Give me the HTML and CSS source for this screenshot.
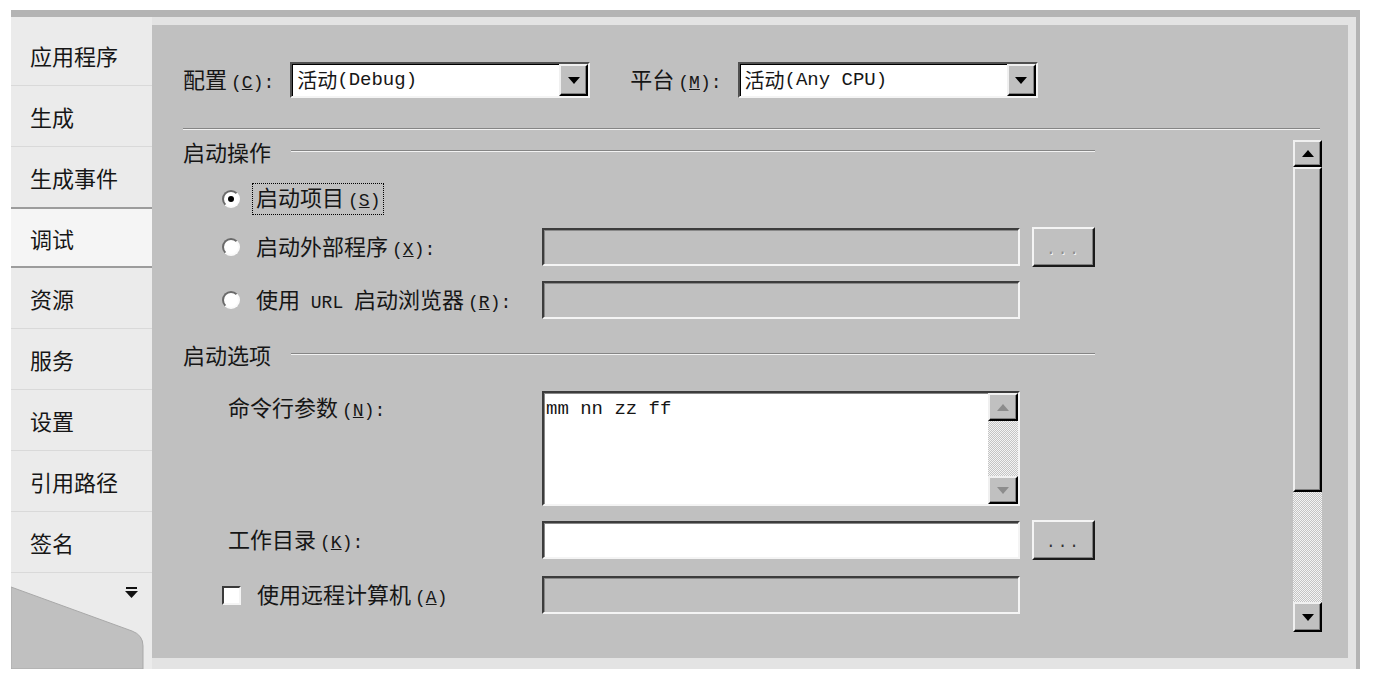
FILE: index.html
```html
<!DOCTYPE html>
<html>

<head>
    <meta charset="utf-8">
    <link rel="stylesheet" href="styles.css">
</head>

<body>

    <div class="frame">
        <div class="tabs">
            <div class="tab">应用程序</div>
            <div class="tab">生成</div>
            <div class="tab">生成事件</div>
            <div class="tab active">调试</div>
            <div class="tab">资源</div>
            <div class="tab">服务</div>
            <div class="tab">设置</div>
            <div class="tab">引用路径</div>
            <div class="tab">签名</div>
            <div class="tab-tail">
                <svg width="141" height="95" viewBox="0 0 141 95">
                    <path d="M0 13 L121 57 Q132 61 132 72 L132 95 L0 95 Z" fill="#c0c0c0" stroke="#a9a9a9" stroke-width="1"/>
                    <rect x="115" y="13" width="11" height="2" fill="#111"/>
                    <path d="M114 17 L127 17 L120.5 24 Z" fill="#111"/>
                </svg>
            </div>
        </div>

        <div class="panel">
            <div class="topbar">
                <span class="lbl">配置<span class="key">(<u>C</u>):</span></span>
                <div class="combo">
                    <span class="combo-text">活动<span class="mono">(Debug)</span></span>
                    <span class="drop"><svg width="12" height="7" viewBox="0 0 12 7"><path d="M0 0 L12 0 L6 7 Z" fill="#000"/></svg></span>
                </div>
                <span class="lbl platform">平台<span class="key">(<u>M</u>):</span></span>
                <div class="combo">
                    <span class="combo-text">活动<span class="mono">(Any CPU)</span></span>
                    <span class="drop"><svg width="12" height="7" viewBox="0 0 12 7"><path d="M0 0 L12 0 L6 7 Z" fill="#000"/></svg></span>
                </div>
            </div>

            <div class="content">
                <div class="form">
                    <div class="group">启动操作</div>

                    <div class="row row-start">
                        <div class="cell">
                            <span class="radio checked"></span>
                            <span class="focus">启动项目<span class="key">(<u>S</u>)</span></span>
                        </div>
                    </div>

                    <div class="row row-ext">
                        <div class="cell">
                            <span class="radio"></span>
                            <span>启动外部程序<span class="key">(<u>X</u>):</span></span>
                        </div>
                        <div class="field disabled"></div>
                        <div class="browse">...</div>
                    </div>

                    <div class="row row-url">
                        <div class="cell">
                            <span class="radio"></span>
                            <span>使用<span class="mono"> URL </span>启动浏览器<span class="key">(<u>R</u>):</span></span>
                        </div>
                        <div class="field disabled"></div>
                    </div>

                    <div class="group group-opts">启动选项</div>

                    <div class="row row-args">
                        <div class="cell plain">命令行参数<span class="key">(<u>N</u>):</span></div>
                        <div class="field memo">
                            <div class="memo-text">mm nn zz ff</div>
                            <div class="memo-scroll">
                                <span class="sbtn"><svg width="12" height="7" viewBox="0 0 12 7"><path d="M0 7 L6 0 L12 7 Z" fill="#8c8c8c"/></svg></span>
                                <span class="strack"></span>
                                <span class="sbtn"><svg width="12" height="7" viewBox="0 0 12 7"><path d="M0 0 L12 0 L6 7 Z" fill="#8c8c8c"/></svg></span>
                            </div>
                        </div>
                    </div>

                    <div class="row row-dir">
                        <div class="cell plain">工作目录<span class="key">(<u>K</u>):</span></div>
                        <div class="field"></div>
                        <div class="browse dark">...</div>
                    </div>

                    <div class="row row-remote">
                        <div class="cell">
                            <span class="check"></span>
                            <span>使用远程计算机<span class="key">(<u>A</u>)</span></span>
                        </div>
                        <div class="field disabled"></div>
                    </div>
                </div>

                <div class="vscroll">
                    <span class="sbtn big"><svg width="12" height="7" viewBox="0 0 12 7"><path d="M0 7 L6 0 L12 7 Z" fill="#000"/></svg></span>
                    <span class="thumb"></span>
                    <span class="strack"></span>
                    <span class="sbtn big"><svg width="12" height="7" viewBox="0 0 12 7"><path d="M0 0 L12 0 L6 7 Z" fill="#000"/></svg></span>
                </div>
            </div>
        </div>
    </div>

</body>

</html>
```

FILE: styles.css
```css
body {
    margin: 0;
    background: #fff;
    font-family: "Noto Sans CJK SC", sans-serif;
    font-size: 22px;
    line-height: 22px;
    color: #161616;
}

.mono,
.key {
    font-family: "Liberation Mono", "Noto Sans CJK SC", monospace;
    font-size: 18px;
}

.key {
    margin-left: 4px;
}

/* outer window frame */
.frame {
    display: flex;
    margin: 10px 0 0 11px;
    width: 1345px;
    height: 652px;
    border-top: 7px solid #b4b4b4;
    border-right: 4px solid #b4b4b4;
    background: #e3e3e3;
}

/* left tab strip */
.tabs {
    display: flex;
    flex-direction: column;
    width: 141px;
    padding-top: 8px;
    background: #ebebeb;
}

.tab {
    display: flex;
    align-items: center;
    height: 61px;
    padding-left: 19px;
    box-sizing: border-box;
    border-bottom: 1px solid #d9d9d9;
}

.tab.active {
    background: #f5f5f5;
    border-top: 2px solid #9c9c9c;
    border-bottom: 2px solid #9c9c9c;
    margin-top: -1px;
    margin-right: -1px;
}

.tab-tail {
    flex: 1;
    display: flex;
    align-items: flex-end;
}

.tab-tail svg {
    display: block;
}

/* main page */
.panel {
    flex: 1;
    display: flex;
    flex-direction: column;
    margin: 8px 8px 11px 0;
    background: #c0c0c0;
}

.topbar {
    display: flex;
    align-items: center;
    margin: 0 28px 0 31px;
    padding: 37px 0 30px;
    border-bottom: 1px solid #858585;
    box-shadow: 0 1px 0 #f2f2f2;
}

.lbl {
    white-space: nowrap;
}

.platform {
    margin-left: 40px;
}

.combo {
    display: flex;
    width: 300px;
    height: 36px;
    margin-left: 16px;
    box-sizing: border-box;
    background: #fff;
    border: 2px solid;
    border-color: #505050 #f4f4f4 #f4f4f4 #505050;
    box-shadow: inset 1px 1px 0 #000;
}

.combo-text {
    flex: 1;
    display: flex;
    align-items: center;
    padding-left: 5px;
    font-size: 20px;
}

.combo-text .mono {
    font-size: 19px;
}

.drop {
    display: flex;
    align-items: center;
    justify-content: center;
    width: 29px;
    box-sizing: border-box;
    background: #c0c0c0;
    border: 2px solid;
    border-color: #f0f0f0 #000 #000 #f0f0f0;
    box-shadow: inset -1px -1px 0 #808080;
}

.content {
    flex: 1;
    display: flex;
    margin: 11px 26px 26px 31px;
}

.form {
    width: 912px;
}

/* group header with etched rule */
.group {
    display: flex;
    align-items: center;
    height: 22px;
}

.group::after {
    content: "";
    flex: 1;
    margin-left: 20px;
    border-top: 1px solid #858585;
    border-bottom: 1px solid #f2f2f2;
}

.group-opts {
    margin-top: 24px;
}

.row {
    display: flex;
    align-items: center;
    height: 38px;
}

.row-start {
    margin-top: 18px;
}

.row-ext {
    margin-top: 10px;
}

.row-url {
    margin-top: 15px;
}

.row-args {
    margin-top: 26px;
    height: 115px;
    align-items: flex-start;
}

.row-dir {
    margin-top: 15px;
}

.row-remote {
    margin-top: 17px;
}

.cell {
    display: flex;
    align-items: center;
    gap: 16px;
    width: 359px;
    padding-left: 39px;
    box-sizing: border-box;
    white-space: nowrap;
}

.cell.plain {
    display: block;
    padding-left: 45px;
}

.row-args .cell {
    padding-top: 4px;
}

.radio {
    width: 18px;
    height: 18px;
    box-sizing: border-box;
    border-radius: 50%;
    background: #fff;
    border: 2px solid;
    border-color: #6a6a6a #fafafa #fafafa #6a6a6a;
    display: flex;
    align-items: center;
    justify-content: center;
}

.radio.checked::after {
    content: "";
    width: 6px;
    height: 6px;
    border-radius: 50%;
    background: #000;
}

.check {
    width: 19px;
    height: 19px;
    box-sizing: border-box;
    background: #fff;
    border: 2px solid;
    border-color: #3a3a3a #f4f4f4 #f4f4f4 #3a3a3a;
}

.focus {
    margin-left: -4px;
    padding: 1px 3px 2px;
    border: 1px dotted #000;
}

/* text boxes */
.field {
    width: 478px;
    height: 38px;
    box-sizing: border-box;
    background: #fff;
    border: 2px solid;
    border-color: #3c3c3c #f4f4f4 #f4f4f4 #3c3c3c;
    box-shadow: inset 1px 1px 0 #888;
}

.field.disabled {
    background: #c0c0c0;
}

.field.memo {
    display: flex;
    height: 115px;
}

.memo-text {
    flex: 1;
    padding: 6px 2px;
    font-family: "Liberation Mono", monospace;
    font-size: 19px;
    line-height: 20px;
}

.memo-scroll {
    display: flex;
    flex-direction: column;
    width: 30px;
}

.sbtn {
    display: flex;
    align-items: center;
    justify-content: center;
    height: 28px;
    box-sizing: border-box;
    background: #c0c0c0;
    border: 2px solid;
    border-color: #f0f0f0 #000 #000 #f0f0f0;
    box-shadow: inset -1px -1px 0 #808080;
}

.strack {
    flex: 1;
    background: repeating-conic-gradient(#f4f4f4 0 25%, #c4c4c4 0 50%) 0 0 / 2px 2px;
}

.browse {
    width: 63px;
    height: 40px;
    margin-left: 12px;
    box-sizing: border-box;
    background: #c0c0c0;
    border: 2px solid;
    border-color: #f4f4f4 #1a1a1a #1a1a1a #f4f4f4;
    box-shadow: inset -1px -1px 0 #808080;
    text-align: center;
    padding-top: 10px;
    font-family: "Liberation Mono", monospace;
    font-size: 16px;
    letter-spacing: 2px;
    color: #8e8e8e;
    text-shadow: 1px 1px 0 #f4f4f4;
}

.browse.dark {
    color: #333;
    text-shadow: none;
}

/* page scroll bar */
.vscroll {
    display: flex;
    flex-direction: column;
    width: 29px;
    margin-left: auto;
}

.sbtn.big {
    height: 27px;
}

.thumb {
    height: 325px;
    box-sizing: border-box;
    background: #c0c0c0;
    border: 2px solid;
    border-color: #f0f0f0 #000 #000 #f0f0f0;
    box-shadow: inset -1px -1px 0 #808080;
}

.vscroll .sbtn:last-child {
    height: 30px;
}
```
